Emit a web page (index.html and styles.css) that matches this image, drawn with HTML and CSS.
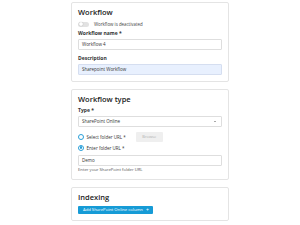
FILE: index.html
```html
<!DOCTYPE html>
<html lang="en">
<head>
<meta charset="utf-8">
<title>Workflow</title>
<link rel="stylesheet" href="styles.css">
</head>
<body>
<main class="page">
  <section class="card">
    <h2 class="card-title">Workflow</h2>
    <div class="toggle-row">
      <span class="toggle"><span class="knob"></span></span>
      <span class="toggle-text">Workflow is deactivated</span>
    </div>
    <div class="field">
      <label class="label">Workflow name *</label>
      <div class="input">Workflow 4</div>
    </div>
    <div class="field">
      <label class="label">Description</label>
      <div class="input input-filled">Sharepoint Workflow</div>
    </div>
  </section>

  <section class="card">
    <h2 class="card-title">Workflow type</h2>
    <div class="field field-first">
      <label class="label">Type *</label>
      <div class="input select">SharePoint Online<span class="caret"></span></div>
    </div>
    <div class="radio-row radio-row-first">
      <span class="radio"></span>
      <span class="radio-label">Select folder URL *</span>
      <span class="browse">Browse</span>
    </div>
    <div class="radio-row">
      <span class="radio radio-checked"><span class="radio-dot"></span></span>
      <span class="radio-label">Enter folder URL *</span>
    </div>
    <div class="input input-url">Demo</div>
    <p class="help">Enter your SharePoint folder URL</p>
  </section>

  <section class="card">
    <h2 class="card-title">Indexing</h2>
    <div class="actions">
      <span class="btn">Add SharePoint Online column <span class="plus">+</span></span>
    </div>
  </section>
</main>
</body>
</html>
```

FILE: styles.css
```css
* { box-sizing: border-box; }
html, body { margin: 0; background: #ffffff; }
body {
  font-family: "Open Sans", "Liberation Sans", sans-serif;
  color: #333333;
  padding-top: 2px;
}
.page {
  width: 158px;
  margin: 0 auto;
  display: flex;
  flex-direction: column;
  gap: 7px;
}
.card {
  border: 1px solid #e4e4e4;
  border-radius: 2px;
  padding: 5px 6px 6px;
  background: #ffffff;
}
.card-title {
  margin: 0 0 5px;
  font-size: 7.5px;
  line-height: 8px;
  font-weight: 600;
  color: #222222;
}
.toggle-row {
  display: flex;
  align-items: center;
  height: 6px;
  margin-bottom: 3.3px;
}
.toggle {
  width: 11px;
  height: 5px;
  border-radius: 3px;
  background: #e2e2e2;
  display: flex;
  align-items: center;
  padding: 0 0.5px;
}
.knob {
  width: 4px;
  height: 4px;
  border-radius: 50%;
  background: #ffffff;
  box-shadow: 0 0 1px rgba(0,0,0,0.35);
}
.toggle-text {
  margin-left: 5px;
  font-size: 4.4px;
  color: #444444;
}
.field + .field { margin-top: 5.3px; }
.card-title + .field { margin-top: -0.5px; }
.label {
  display: block;
  font-size: 5px;
  line-height: 6px;
  font-weight: 700;
  color: #333333;
  margin-bottom: 2.5px;
}
.input {
  height: 11px;
  border: 1px solid #dedede;
  border-radius: 1px;
  padding: 0 3px;
  font-size: 4.5px;
  display: flex;
  align-items: center;
  color: #333333;
}
.input-filled {
  background: #e8f0fe;
  border-color: #d5def0;
}
.select { padding-right: 5px; }
.caret {
  margin-left: auto;
  width: 0;
  height: 0;
  border-left: 1.3px solid transparent;
  border-right: 1.3px solid transparent;
  border-top: 1.7px solid #555555;
}
.radio-row {
  display: flex;
  align-items: center;
  height: 6px;
  margin-top: 3px;
}
.radio-row-first {
  height: 10px;
  margin-top: 5px;
}
.radio {
  width: 6px;
  height: 6px;
  border: 1px solid #2a9fd8;
  border-radius: 50%;
  display: flex;
  align-items: center;
  justify-content: center;
  flex-shrink: 0;
}
.radio-dot {
  width: 2.6px;
  height: 2.6px;
  border-radius: 50%;
  background: #2a9fd8;
}
.radio-label {
  margin-left: 2.5px;
  font-size: 4.5px;
  color: #333333;
}
.browse {
  margin-left: 10px;
  width: 27px;
  height: 10px;
  background: #efefef;
  color: #b0b0b0;
  font-size: 4px;
  border-radius: 1px;
  display: flex;
  align-items: center;
  justify-content: center;
}
.input-url { margin-top: 4px; }
.help {
  margin: 1px 0 0;
  font-size: 4.2px;
  line-height: 6px;
  color: #555555;
}
.actions {
  display: flex;
}
.btn {
  display: inline-flex;
  align-items: center;
  height: 8.5px;
  padding: 0 4px 0 5px;
  background: #169bd6;
  color: #ffffff;
  font-size: 4.2px;
  border-radius: 1px;
  gap: 3px;
}
.plus { font-size: 5px; }
```
